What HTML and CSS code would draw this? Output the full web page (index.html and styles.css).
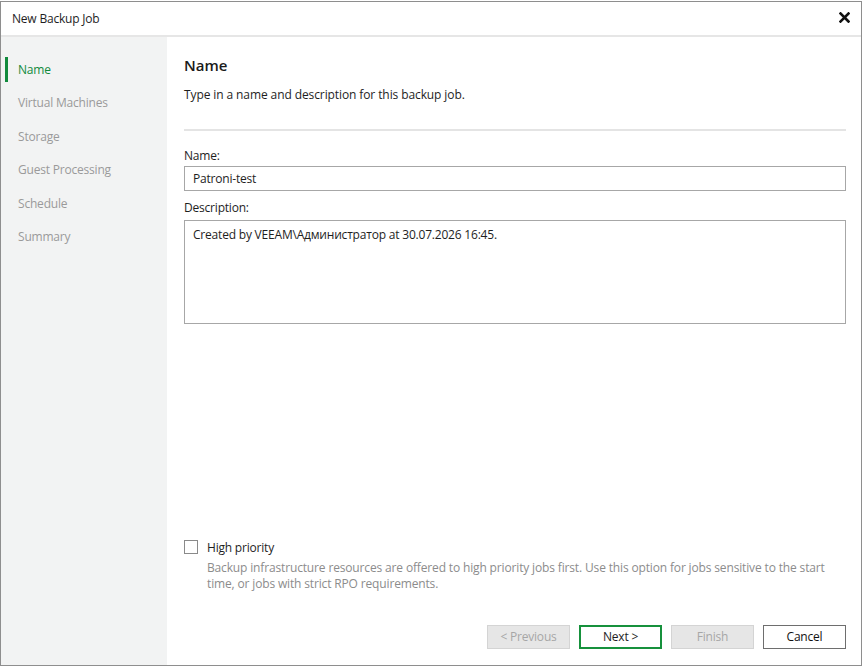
FILE: index.html
```html
<!DOCTYPE html>
<html>
<head>
<meta charset="utf-8">
<link rel="stylesheet" href="styles.css">
</head>
<body>
<div class="window">
  <div class="titlebar">
    <span class="title">New Backup Job</span>
    <svg class="close" width="11" height="11" viewBox="0 0 11 11"><path d="M1.5 1.5 L9.5 9.5 M9.5 1.5 L1.5 9.5" stroke="#111" stroke-width="2.6" stroke-linecap="square"/></svg>
  </div>
  <div class="main">
    <nav class="sidebar">
      <div class="step active">Name</div>
      <div class="step">Virtual Machines</div>
      <div class="step">Storage</div>
      <div class="step">Guest Processing</div>
      <div class="step">Schedule</div>
      <div class="step">Summary</div>
    </nav>
    <section class="content">
      <h1 class="heading">Name</h1>
      <p class="subtitle">Type in a name and description for this backup job.</p>
      <div class="separator"></div>
      <label class="label">Name:</label>
      <div class="input">Patroni-test</div>
      <label class="label label-desc">Description:</label>
      <div class="textarea">Created by VEEAM\Администратор at 30.07.2026 16:45.</div>
      <div class="priority">
        <div class="check-row">
          <span class="checkbox"></span>
          <span class="check-label">High priority</span>
        </div>
        <p class="hint">Backup infrastructure resources are offered to high priority jobs first. Use this option for jobs sensitive to the start time, or jobs with strict RPO requirements.</p>
      </div>
      <div class="buttons">
        <div class="btn disabled">&lt; Previous</div>
        <div class="btn primary">Next &gt;</div>
        <div class="btn disabled">Finish</div>
        <div class="btn cancel">Cancel</div>
      </div>
    </section>
  </div>
</div>
</body>
</html>
```
FILE: styles.css
```css
* { box-sizing: border-box; }
html, body { margin: 0; padding: 0; background: #fff; }
body {
  font-family: "Open Sans", "Noto Sans", sans-serif;
  font-size: 12px;
  color: #1e1e1e;
}
.window {
  margin-top: 1px;
  width: 862px;
  height: 665px;
  border: 1px solid #8e8e8e;
  display: flex;
  flex-direction: column;
  background: #fff;
}
.titlebar {
  height: 35px;
  border-bottom: 2px solid #e6e6e6;
  display: flex;
  align-items: center;
  justify-content: space-between;
  padding: 0 11px 0 11px;
  flex-shrink: 0;
}
.title { font-size: 12px; color: #1e1e1e; letter-spacing: -0.2px; }
.close { display: block; margin-top: -2px; }
.main { flex: 1; display: flex; min-height: 0; }
.sidebar {
  width: 166px;
  background: #f2f3f3;
  padding-top: 20px;
  display: flex;
  flex-direction: column;
  gap: 8.4px;
}
.step {
  height: 25px;
  line-height: 25px;
  margin-left: 4px;
  padding-left: 10px;
  border-left: 3px solid transparent;
  color: #9a9a9a;
  font-size: 12px;
  letter-spacing: -0.2px;
}
.step.active { border-left-color: #118a3c; color: #118a3c; }
.content {
  flex: 1;
  padding: 18px 15px 16px 17px;
  display: flex;
  flex-direction: column;
}
.heading {
  margin: 0;
  font-size: 15px;
  line-height: 20px;
  font-weight: 600;
  color: #1a1a1a;
}
.subtitle {
  margin: 12px 0 0;
  line-height: 16px;
  letter-spacing: -0.1px;
}
.separator { height: 2px; background: #e4e4e4; margin-top: 26px; }
.label { display: block; margin-top: 17px; line-height: 16px; letter-spacing: -0.2px; }
.label-desc { margin-top: 9px; }
.input {
  margin-top: 2px;
  height: 25px;
  border: 1px solid #a7a7a7;
  padding: 0 8px;
  line-height: 23px;
  letter-spacing: -0.2px;
}
.textarea {
  margin-top: 4px;
  height: 104px;
  border: 1px solid #a7a7a7;
  padding: 6px 8px;
  line-height: 16px;
  letter-spacing: -0.2px;
}
.priority { margin-top: auto; }
.check-row { display: flex; align-items: center; height: 16px; }
.checkbox {
  width: 14px; height: 14px;
  border: 1px solid #8a8a8a;
  background: #fff;
  margin-right: 9px;
}
.check-label { letter-spacing: -0.2px; }
.hint {
  margin: 5px 0 0 23px;
  color: #8c8c8c;
  line-height: 16px;
  letter-spacing: -0.15px;
}
.buttons {
  margin-top: 33px;
  display: flex;
  justify-content: flex-end;
  gap: 9px;
}
.btn {
  width: 83px;
  height: 24px;
  line-height: 22px;
  text-align: center;
  border: 1px solid #d6d6d6;
  letter-spacing: -0.2px;
}
.btn.disabled { background: #e6e6e6; color: #a6a6a6; border-color: #d4d4d4; }
.btn.primary { border: 2px solid #16913c; line-height: 20px; color: #1e1e1e; background: #fff; }
.btn.cancel { border-color: #6e6e6e; color: #111; background: #fff; }
```
